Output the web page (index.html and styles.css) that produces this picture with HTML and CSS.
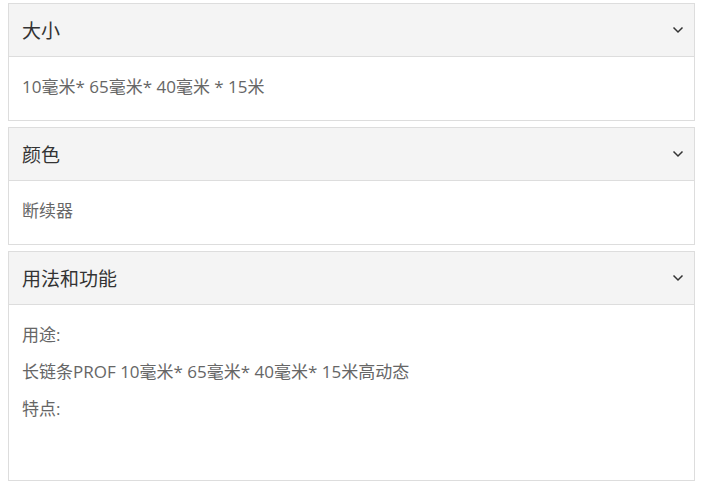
FILE: index.html
```html
<!DOCTYPE html>
<html lang="zh-CN">
<head>
    <meta charset="utf-8">
    <title>产品参数</title>
    <link rel="stylesheet" href="styles.css">
</head>
<body>
    <div class="panel">
        <div class="panel-heading">
            <h4>大小</h4>
            <svg class="chevron" width="12" height="8" viewBox="0 0 12 8"><path d="M1.5 1.5 L6 6 L10.5 1.5" fill="none" stroke="#333" stroke-width="1.5"/></svg>
        </div>
        <div class="panel-body">
            <p>10毫米* 65毫米* 40毫米 * 15米</p>
        </div>
    </div>
    <div class="panel">
        <div class="panel-heading">
            <h4>颜色</h4>
            <svg class="chevron" width="12" height="8" viewBox="0 0 12 8"><path d="M1.5 1.5 L6 6 L10.5 1.5" fill="none" stroke="#333" stroke-width="1.5"/></svg>
        </div>
        <div class="panel-body">
            <p>断续器</p>
        </div>
    </div>
    <div class="panel">
        <div class="panel-heading">
            <h4>用法和功能</h4>
            <svg class="chevron" width="12" height="8" viewBox="0 0 12 8"><path d="M1.5 1.5 L6 6 L10.5 1.5" fill="none" stroke="#333" stroke-width="1.5"/></svg>
        </div>
        <div class="panel-body tall">
            <p>用途:</p>
            <p>长链条PROF 10毫米* 65毫米* 40毫米* 15米高动态</p>
            <p>特点:</p>
        </div>
    </div>
</body>
</html>
```

FILE: styles.css
```css
* {
    box-sizing: border-box;
}
body {
    background-color: #FFF;
    color: #333;
    font-family: "Open Sans", "Noto Sans CJK SC", sans-serif;
    margin: 3px 26px 0 8px;
}
.panel {
    border: 1px solid #DDD;
    margin: 0 0 6px;
}
.panel-heading {
    align-items: center;
    background-color: #F4F4F4;
    border-bottom: 1px solid #DDD;
    display: flex;
    height: 53px;
    justify-content: space-between;
    padding: 0 10px 0 13px;
}
.panel-heading h4 {
    font-size: 19px;
    font-weight: 400;
    margin: 0;
}
.panel-body {
    color: #666;
    font-size: 17px;
    height: 63px;
    padding: 16px 13px 0;
}
.panel-body.tall {
    height: 175px;
}
.panel-body p {
    line-height: 28px;
    margin: 0 0 9px;
}
```
